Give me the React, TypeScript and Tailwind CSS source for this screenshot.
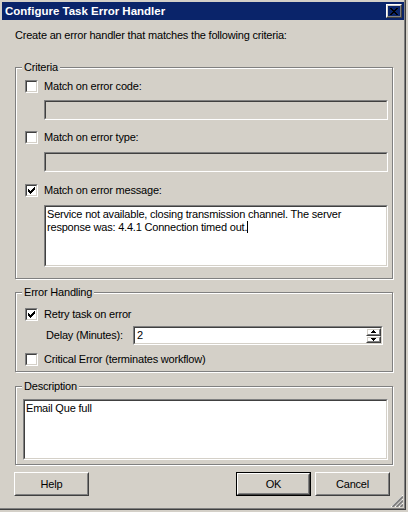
import type { ReactNode } from 'react'

function Raised({ children, className = '' }: { children?: ReactNode; className?: string }) {
  return (
    <div className={`border border-t-white border-l-white border-r-[#404040] border-b-[#404040] ${className}`}>
      <div className="w-full h-full border border-t-[#d4d0c8] border-l-[#d4d0c8] border-r-[#808080] border-b-[#808080] flex items-center justify-center">
        {children}
      </div>
    </div>
  )
}

function Sunken({ children, className = '', disabled = false }: { children?: ReactNode; className?: string; disabled?: boolean }) {
  return (
    <div className={`border border-t-[#808080] border-l-[#808080] border-r-white border-b-white ${className}`}>
      <div
        className={`w-full h-full border border-t-[#404040] border-l-[#404040] border-r-[#d4d0c8] border-b-[#d4d0c8] ${
          disabled ? 'bg-[#d4d0c8]' : 'bg-white'
        }`}
      >
        {children}
      </div>
    </div>
  )
}

function CheckBox({ checked }: { checked?: boolean }) {
  return (
    <Sunken className="w-[13px] h-[13px] shrink-0">
      {checked && (
        <svg width="7" height="7" viewBox="0 0 7 7" className="ml-[1px] mt-[1px]" shapeRendering="crispEdges">
          <path d="M0 2h1v3H0z M1 3h1v3H1z M2 4h1v3H2z M3 3h1v3H3z M4 2h1v3H4z M5 1h1v3H5z M6 0h1v3H6z" fill="#000" />
        </svg>
      )}
    </Sunken>
  )
}

function CheckRow({ checked, label, className = '' }: { checked?: boolean; label: string; className?: string }) {
  return (
    <div className={`flex items-center h-[13px] ${className}`}>
      <CheckBox checked={checked} />
      <span className="ml-[6px]">{label}</span>
    </div>
  )
}

function Group({ label, className = '', children }: { label: string; className?: string; children: ReactNode }) {
  return (
    <div className={`relative border border-[#808080] shadow-[inset_1px_1px_0_#fff,1px_1px_0_#fff] ${className}`}>
      <span className="absolute -top-[7px] left-[6px] px-[2px] bg-[#d4d0c8]">{label}</span>
      {children}
    </div>
  )
}

function Arrow({ down }: { down?: boolean }) {
  return (
    <svg width="5" height="3" viewBox="0 0 5 3" shapeRendering="crispEdges" className={down ? 'rotate-180' : ''}>
      <path d="M2 0h1v1H2z M1 1h3v1H1z M0 2h5v1H0z" fill="#000" />
    </svg>
  )
}

export default function App() {
  return (
    <div className="w-[408px] h-[512px] bg-[#d4d0c8] text-black text-[11px] leading-[13px] tracking-[-0.2px] font-['Liberation_Sans',Arial,sans-serif]">
      <div className="relative w-[406px] h-[510px] border-r border-b border-[#404040] shadow-[inset_-1px_-1px_0_#808080] pl-[2px] pt-[2px] flex flex-col">
        {/* title bar */}
        <div className="w-[402px] h-[18px] bg-[#0a246a] flex items-center justify-between pl-[3px] pr-[2px]">
          <span className="text-white font-bold text-[11.5px] tracking-normal">Configure Task Error Handler</span>
          <Raised className="w-[16px] h-[14px]">
            <svg width="8" height="7" viewBox="0 0 8 7" shapeRendering="crispEdges">
              <path
                d="M0 0h2v1H0z M6 0h2v1H6z M1 1h2v1H1z M5 1h2v1H5z M2 2h4v1H2z M3 3h2v1H3z M2 4h4v1H2z M1 5h2v1H1z M5 5h2v1H5z M0 6h2v1H0z M6 6h2v1H6z"
                fill="#000"
              />
            </svg>
          </Raised>
        </div>

        <p className="ml-[13px] mt-[9px]">Create an error handler that matches the following criteria:</p>

        {/* Criteria */}
        <Group label="Criteria" className="ml-[13px] mt-[25px] w-[378px] h-[212px]">
          <div className="flex flex-col pl-[9px] pt-[12px]">
            <CheckRow label="Match on error code:" />
            <Sunken disabled className="ml-[19px] mt-[7px] w-[344px] h-[20px]" />
            <CheckRow label="Match on error type:" className="mt-[11px]" />
            <Sunken disabled className="ml-[19px] mt-[8px] w-[344px] h-[20px]" />
            <CheckRow checked label="Match on error message:" className="mt-[12px]" />
            <Sunken className="ml-[19px] mt-[8px] w-[344px] h-[62px]">
              <p className="pl-[1px] pt-[1px]">
                Service not available, closing transmission channel. The server response was: 4.4.1 Connection timed out.
                <span className="inline-block w-[1px] h-[12px] bg-black align-[-2px]" />
              </p>
            </Sunken>
          </div>
        </Group>

        {/* Error Handling */}
        <Group label="Error Handling" className="ml-[13px] mt-[13px] w-[378px] h-[80px]">
          <div className="flex flex-col pl-[9px] pt-[15px]">
            <CheckRow checked label="Retry task on error" />
            <div className="flex items-center mt-[5px] pl-[21px]">
              <span className="w-[87px]">Delay (Minutes):</span>
              <Sunken className="w-[250px] h-[19px]">
                <div className="flex h-full items-center">
                  <span className="flex-1 pl-[2px]">2</span>
                  <div className="flex flex-col w-[15px] h-full">
                    <Raised className="flex-1">
                      <Arrow />
                    </Raised>
                    <Raised className="flex-1">
                      <Arrow down />
                    </Raised>
                  </div>
                </div>
              </Sunken>
            </div>
            <CheckRow label="Critical Error (terminates workflow)" className="mt-[8px]" />
          </div>
        </Group>

        {/* Description */}
        <Group label="Description" className="ml-[13px] mt-[14px] w-[378px] h-[79px]">
          <div className="pl-[7px] pt-[12px]">
            <Sunken className="w-[365px] h-[61px]">
              <p className="pl-[1px] pt-[1px]">Email Que full</p>
            </Sunken>
          </div>
        </Group>

        {/* buttons */}
        <div className="ml-[12px] mt-[7px] w-[376px] flex justify-between">
          <Raised className="w-[75px] h-[24px]">Help</Raised>
          <div className="flex gap-[4px]">
            <div className="border border-black">
              <Raised className="w-[73px] h-[22px]">OK</Raised>
            </div>
            <Raised className="w-[75px] h-[24px]">Cancel</Raised>
          </div>
        </div>

        {/* size grip */}
        <svg width="12" height="12" viewBox="0 0 12 12" className="absolute right-[2px] bottom-[2px]">
          {[0, 4, 8].map((k) => (
            <g key={k}>
              <line x1={k} y1={12} x2={12} y2={k} stroke="#fff" strokeWidth="1" />
              <line x1={k + 1.5} y1={12} x2={12} y2={k + 1.5} stroke="#808080" strokeWidth="2" />
            </g>
          ))}
        </svg>
      </div>
    </div>
  )
}
